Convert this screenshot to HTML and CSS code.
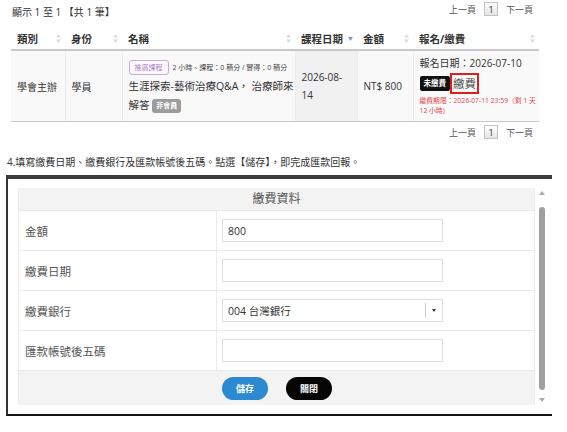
FILE: index.html
```html
<!DOCTYPE html>
<html lang="zh-Hant">
<head>
<meta charset="utf-8">
<title>繳費資料</title>
<link rel="stylesheet" href="styles.css">
</head>
<body>
<div class="top">
  <div class="info">顯示 1 至 1 【共 1 筆】</div>
  <div class="pager"><span>上一頁</span><span class="cur">1</span><span>下一頁</span></div>
</div>
<table class="grid">
  <colgroup>
    <col class="c1"><col class="c2"><col class="c3"><col class="c4"><col class="c5"><col class="c6">
  </colgroup>
  <thead>
    <tr>
      <th><div class="th">類別<svg class="sort" viewBox="0 0 5 9" width="5" height="9"><polygon points="0,3.5 2.5,0 5,3.5"/><polygon points="0,5.5 2.5,9 5,5.5"/></svg></div></th>
      <th><div class="th">身份<svg class="sort" viewBox="0 0 5 9" width="5" height="9"><polygon points="0,3.5 2.5,0 5,3.5"/><polygon points="0,5.5 2.5,9 5,5.5"/></svg></div></th>
      <th><div class="th">名稱<svg class="sort" viewBox="0 0 5 9" width="5" height="9"><polygon points="0,3.5 2.5,0 5,3.5"/><polygon points="0,5.5 2.5,9 5,5.5"/></svg></div></th>
      <th><div class="th">課程日期<svg class="sort on" viewBox="0 0 5 9" width="5" height="9"><polygon points="0,3 2.5,7 5,3"/></svg></div></th>
      <th><div class="th">金額<svg class="sort" viewBox="0 0 5 9" width="5" height="9"><polygon points="0,3.5 2.5,0 5,3.5"/><polygon points="0,5.5 2.5,9 5,5.5"/></svg></div></th>
      <th><div class="th">報名/繳費<svg class="sort" viewBox="0 0 5 9" width="5" height="9"><polygon points="0,3.5 2.5,0 5,3.5"/><polygon points="0,5.5 2.5,9 5,5.5"/></svg></div></th>
    </tr>
  </thead>
  <tbody>
    <tr>
      <td>學會主辦</td>
      <td>學員</td>
      <td class="name">
        <div class="meta"><span class="tag">推廣課程</span><span class="small">2 小時、課程：0 積分 / 實得：0 積分</span></div>
        <div class="title">生涯探索-藝術治療Q&amp;A， 治療師來<br>解答 <span class="gray">非會員</span></div>
      </td>
      <td class="sorted"><div class="date">2026-08-<br>14</div></td>
      <td>NT$ 800</td>
      <td>
        <div class="regdate">報名日期：2026-07-10</div>
        <div class="payrow"><span class="unpaid">未繳費</span><span class="paybox">繳費</span></div>
        <div class="deadline">繳費期限：2026-07-11 23:59（剩 1 天<br>12 小時)</div>
      </td>
    </tr>
  </tbody>
</table>
<div class="pager bottom"><span>上一頁</span><span class="cur">1</span><span>下一頁</span></div>
<p class="note">4.填寫繳費日期、繳費銀行及匯款帳號後五碼。點選【儲存】，即完成匯款回報。</p>
<div class="frame">
  <div class="panel">
    <div class="phead">繳費資料</div>
    <div class="prow"><div class="lbl">金額</div><div class="val"><div class="inp">800</div></div></div>
    <div class="prow"><div class="lbl">繳費日期</div><div class="val"><div class="inp"></div></div></div>
    <div class="prow"><div class="lbl">繳費銀行</div><div class="val"><div class="inp sel"><span>004 台灣銀行</span><span class="caret"><i></i></span></div></div></div>
    <div class="prow"><div class="lbl">匯款帳號後五碼</div><div class="val"><div class="inp"></div></div></div>
    <div class="pfoot"><button class="btn save">儲存</button><button class="btn close">關閉</button></div>
  </div>
  <div class="sbar"><span class="arr up"></span><span class="thumb"></span><span class="arr down"></span></div>
</div>
</body>
</html>
```
FILE: styles.css
```css
body {
  margin: 0;
  width: 567px;
  background: #fff;
  color: #333;
  font-family: "Open Sans", "Noto Sans CJK TC", sans-serif;
}

.top {
  display: flex;
  justify-content: space-between;
  height: 27px;
  padding: 0 34px 0 12px;
  box-sizing: border-box;
}
.info {
  font-size: 10px;
  line-height: 12px;
  margin-top: 6px;
}
.pager {
  display: flex;
  align-items: center;
  gap: 8px;
  height: 14px;
  margin-top: 2px;
  font-size: 9px;
  color: #555;
}
.pager .cur {
  width: 14px;
  height: 14px;
  box-sizing: border-box;
  border: 1px solid #c4c4c4;
  background: linear-gradient(#fff, #e4e4e4);
  display: flex;
  align-items: center;
  justify-content: center;
  color: #333;
}
.pager.bottom {
  justify-content: flex-end;
  padding-right: 34px;
  margin-top: 3px;
}

.grid {
  margin-left: 11px;
  width: 528px;
  border-collapse: collapse;
  table-layout: fixed;
}
.c1 { width: 54px; }
.c2 { width: 57px; }
.c3 { width: 173px; }
.c4 { width: 62px; }
.c5 { width: 56px; }
.c6 { width: 126px; }

th {
  height: 22px;
  padding: 0 4px 0 6px;
  text-align: left;
  font-size: 10.5px;
  font-weight: 700;
  color: #333;
  border-bottom: 2px solid #c8c8c8;
}
.th {
  display: flex;
  justify-content: space-between;
  align-items: center;
}
.sort { fill: #dcdcdc; }
.sort.on { fill: #8595dc; }

td {
  height: 70px;
  padding: 0 4px 0 6px;
  background: #f9f9f9;
  border-left: 1px solid #ececec;
  border-bottom: 1px solid #c8c8c8;
  vertical-align: middle;
  font-size: 10px;
  white-space: nowrap;
}
td:first-child { border-left: none; }
td.sorted { background: #f1f1f1; }
td.name { font-size: 10.5px; }

.meta {
  display: flex;
  align-items: center;
  gap: 4px;
  height: 19px;
}
.tag {
  border: 1px solid #cfa6e2;
  border-radius: 3px;
  color: #b27fcc;
  font-size: 7px;
  line-height: 9px;
  padding: 2px 5px;
}
.small { font-size: 7px; color: #444; }
.title { line-height: 19px; }
.gray {
  display: inline-block;
  background: #9c9c9c;
  color: #fff;
  font-size: 7px;
  font-weight: 700;
  line-height: 10px;
  padding: 2px 4px;
  border-radius: 3px;
  vertical-align: 1px;
}
.date { line-height: 18px; }

.regdate { line-height: 15px; }
.payrow {
  display: flex;
  align-items: center;
  height: 21px;
  margin-top: 2px;
}
.unpaid {
  background: #111;
  color: #fff;
  font-size: 7.5px;
  font-weight: 700;
  line-height: 15px;
  padding: 0 4px;
  border-radius: 2px;
}
.paybox {
  border: 2px solid #e21d1d;
  height: 21px;
  box-sizing: border-box;
  padding: 0 1px;
  font-size: 11.5px;
  line-height: 17px;
  color: #555;
}
.deadline {
  font-size: 6.8px;
  line-height: 10px;
  color: #e0454a;
  margin-top: 2px;
}

.note {
  margin: 17px 0 0 7px;
  font-size: 10px;
  line-height: 12px;
}

.frame {
  margin: 7px 0 0 6px;
  width: 546px;
  box-sizing: border-box;
  border-top: 4px solid #3c3c3c;
  border-left: 2px solid #333;
  border-bottom: 2px solid #151515;
  padding: 9px 0 9px 10px;
  display: flex;
  background: #fff;
}
.panel {
  width: 517px;
  box-sizing: border-box;
  border-left: 1px solid #ececec;
  border-right: 1px solid #ececec;
}
.phead {
  height: 22px;
  background: #f3f3f3;
  text-align: center;
  font-size: 12px;
  line-height: 22px;
  color: #555;
}
.prow {
  display: grid;
  grid-template-columns: 198px 1fr;
  height: 40px;
  box-sizing: border-box;
  border-top: 1px solid #ebebeb;
}
.lbl {
  display: flex;
  align-items: center;
  padding-left: 6px;
  font-size: 11.5px;
  color: #555;
  border-right: 1px solid #ebebeb;
}
.val {
  display: flex;
  align-items: center;
  padding-left: 5px;
}
.inp {
  width: 221px;
  height: 23px;
  box-sizing: border-box;
  border: 1px solid #dedede;
  padding-left: 5px;
  display: flex;
  align-items: center;
  font-size: 10.5px;
  color: #333;
  background: #fff;
}
.inp.sel { justify-content: space-between; padding-right: 0; }
.caret {
  width: 16px;
  height: 15px;
  border-left: 1px solid #cfcfcf;
  display: flex;
  align-items: center;
  justify-content: center;
}
.caret i {
  width: 0;
  height: 0;
  border-left: 2.5px solid transparent;
  border-right: 2.5px solid transparent;
  border-top: 3px solid #333;
}
.pfoot {
  height: 35px;
  box-sizing: border-box;
  border-top: 1px solid #ebebeb;
  background: #f3f3f3;
  display: flex;
  align-items: center;
  gap: 18px;
  padding-left: 203px;
}
.btn {
  width: 46px;
  height: 23px;
  border: none;
  border-radius: 12px;
  color: #fff;
  font-family: "Open Sans", "Noto Sans CJK TC", sans-serif;
  font-size: 9px;
  font-weight: 700;
  padding: 0;
}
.btn.save { background: #2b8ad0; }
.btn.close { background: #050505; }

.sbar {
  width: 7px;
  margin-left: 3px;
  display: flex;
  flex-direction: column;
  align-items: center;
}
.arr {
  width: 0;
  height: 0;
  border-left: 3px solid transparent;
  border-right: 3px solid transparent;
}
.arr.up { margin-top: 3px; border-bottom: 4px solid #a8a8a8; }
.thumb {
  margin-top: 12px;
  width: 6px;
  height: 183px;
  border-radius: 3px;
  background: #a0a0a0;
}
.arr.down { margin-top: 8px; border-top: 4px solid #a8a8a8; }
```
